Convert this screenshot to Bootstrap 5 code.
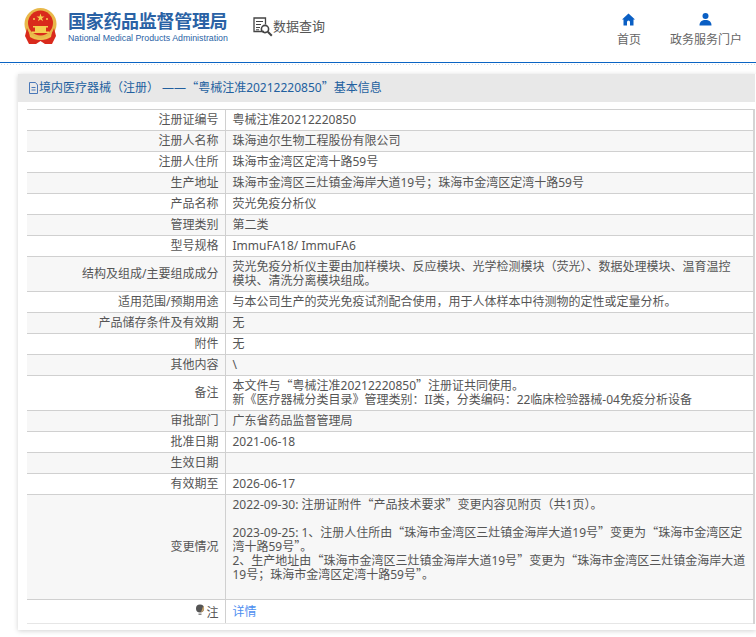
<!DOCTYPE html>
<html lang="zh-CN">
<head>
<meta charset="utf-8">
<title>数据查询</title>
<link href="https://cdn.jsdelivr.net/npm/bootstrap@5.3.0/dist/css/bootstrap.min.css" rel="stylesheet">
<style>
html,body{height:637px;overflow:hidden}
body{background:#fff;font-family:"Noto Sans","Noto Sans CJK SC",sans-serif;font-size:12px;color:#555}
.top-head{height:53px;padding-left:24px;padding-bottom:9px;border-bottom:1px solid #0a64c4;box-sizing:content-box}
.logo-main{font-size:18px;line-height:22px;font-weight:700;color:#2a62a5;letter-spacing:-.3px}
.logo-sub{font-family:"Liberation Sans",sans-serif;font-size:8.8px;line-height:12px;color:#2a62a5;white-space:nowrap}
.logo-box{margin-left:6px;margin-top:1px}
.query-box{margin-left:25px;font-size:13px;color:#555}
.nav-box{margin-left:auto;margin-right:14px;margin-top:8px;gap:29px}
.nav-item-x{color:#666;line-height:16px;text-decoration:none}
.nav-glyph{margin-bottom:6px}
.dither{height:4px;background-image:radial-gradient(#d8dde4 .6px,transparent .7px);background-size:3px 3px}
.panel-x{margin-left:18px;margin-top:7px;background:#fff;box-shadow:0 1px 5px rgba(0,0,0,.18);height:556px;padding-right:1px}
.panel-title{height:28px;background:#e8e8e8;color:#22609f;line-height:28px;padding-left:10px;white-space:pre}
.panel-body{padding:7px 0 0 9px}
.info-table{--bs-table-bg:transparent;--bs-table-striped-bg:transparent;font-size:12px;color:#555;border-top:1px solid #d0d0d0;margin:0;table-layout:fixed;border-right:2px solid #d4d4d4;line-height:14px}
.info-table td{padding:3px 7px 3px;border-bottom:1px solid #d0d0d0;vertical-align:middle;color:#555;box-shadow:none}
.info-table td:first-child{width:198px;text-align:right;padding-right:6px;border-right:1px solid #d0d0d0}
.info-table tr:nth-child(even) td{background:#f7f7f7}
.info-table tr:last-child td{border-bottom-color:#e6e6e6;padding-top:4px}
.qt{font-family:"Noto Sans CJK SC",sans-serif;line-height:0}
.detail-link{color:#4d8ef0;text-decoration:none}
</style>
</head>
<body>
<header class="top-head d-flex align-items-center">
  <svg width="38" height="38" viewBox="0 0 38 38" class="flex-shrink-0">
    <circle cx="16.500" cy="16" r="16" fill="#e8b84a"/>
    <circle cx="16.500" cy="15" r="12.500" fill="#d92a1c"/>
    <polygon points="16.500,5.500 17.500,8.500 20.500,8.500 18,10.300 19,13.300 16.500,11.500 14,13.300 15,10.300 12.500,8.500 15.500,8.500" fill="#f4cf50"/>
    <circle cx="10" cy="11" r="1" fill="#f4cf50"/><circle cx="23" cy="11" r="1" fill="#f4cf50"/>
    <path d="M9 18h15v1.500H9zM11 19.500h11v4H11zM8 23.500h17V25H8z" fill="#f4cf50"/>
    <path d="M3 20c2 7 7 11 13.500 12C23 31 28 27 30 20l2 8-4 8h-7l-4.500-3-4.500 3H5l-4-8z" fill="#d92a1c"/>
    <path d="M5 24c3 4 7 6 11.500 6.500C21 30 25 28 28 24l-1 5c-3 2-6 3-10.500 3S9 31 6 29z" fill="#edc04e"/>
  </svg>
  <div class="logo-box">
    <div class="logo-main">国家药品监督管理局</div>
    <div class="logo-sub">National Medical Products Administration</div>
  </div>
  <div class="query-box d-flex align-items-center">
    <svg width="20" height="20" viewBox="0 0 20 20" class="flex-shrink-0" fill="none" stroke="#444" stroke-width="1.300">
      <path d="M11 14.500H1V1h11.500v6.500"/><path d="M3 4.500h7M3 7.500h5M3 10.500h4M3 12.800h3" stroke-width="1"/>
      <circle cx="12" cy="12" r="3.600" stroke-width="1.600"/><path d="M14.800 14.800l4 4" stroke-width="2"/>
    </svg>
    <span>数据查询</span>
  </div>
  <nav class="nav-box d-flex">
    <a class="nav-item-x d-flex flex-column align-items-center" href="#">
      <svg width="13" height="13" viewBox="0 0 13 13" class="nav-glyph"><path d="M6.500 0.500 13 6.500h-1.500V12.500H8V9a1.500 1.500 0 0 0-3 0v3.500H1.500V6.500H0z" fill="#0a5fc4"/></svg>
      <span>首页</span>
    </a>
    <a class="nav-item-x d-flex flex-column align-items-center" href="#">
      <svg width="13" height="13" viewBox="0 0 13 13" class="nav-glyph"><circle cx="6.500" cy="3" r="3" fill="#0a5fc4"/><path d="M0.500 12.500c0-4 2.500-5.500 6-5.500s6 1.500 6 5.500z" fill="#0a5fc4"/></svg>
      <span>政务服务门户</span>
    </a>
  </nav>
</header>
<div class="dither"></div>
<main class="panel-x">
  <div class="panel-title d-flex align-items-center">
    <svg width="11" height="12" viewBox="0 0 11 12" class="flex-shrink-0" fill="none" stroke="#4a78b8"><path d="M1.500.5h6l2 2.500v8.500h-8zM3.500 5.500h4M3.500 8h4"/></svg>
    <span>境内医疗器械（注册） ——<span class="qt">“</span>粤械注准20212220850<span class="qt">”</span>基本信息</span>
  </div>
  <div class="panel-body">
    <table class="table info-table">
      <tbody>
        <tr><td>注册证编号</td><td>粤械注准20212220850</td></tr>
        <tr><td>注册人名称</td><td>珠海迪尔生物工程股份有限公司</td></tr>
        <tr><td>注册人住所</td><td>珠海市金湾区定湾十路59号</td></tr>
        <tr><td>生产地址</td><td>珠海市金湾区三灶镇金海岸大道19号；珠海市金湾区定湾十路59号</td></tr>
        <tr><td>产品名称</td><td>荧光免疫分析仪</td></tr>
        <tr><td>管理类别</td><td>第二类</td></tr>
        <tr><td>型号规格</td><td>ImmuFA18/ ImmuFA6</td></tr>
        <tr><td>结构及组成/主要组成成分</td><td>荧光免疫分析仪主要由加样模块、反应模块、光学检测模块（荧光）、数据处理模块、温育温控<br>模块、清洗分离模块组成。</td></tr>
        <tr><td>适用范围/预期用途</td><td>与本公司生产的荧光免疫试剂配合使用，用于人体样本中待测物的定性或定量分析。</td></tr>
        <tr><td>产品储存条件及有效期</td><td>无</td></tr>
        <tr><td>附件</td><td>无</td></tr>
        <tr><td>其他内容</td><td>\</td></tr>
        <tr><td>备注</td><td>本文件与<span class="qt">“</span>粤械注准20212220850<span class="qt">”</span>注册证共同使用。<br>新《医疗器械分类目录》管理类别：II类，分类编码：22临床检验器械-04免疫分析设备</td></tr>
        <tr><td>审批部门</td><td>广东省药品监督管理局</td></tr>
        <tr><td>批准日期</td><td>2021-06-18</td></tr>
        <tr><td>生效日期</td><td></td></tr>
        <tr><td>有效期至</td><td>2026-06-17</td></tr>
        <tr><td>变更情况</td><td>2022-09-30: 注册证附件<span class="qt">“</span>产品技术要求<span class="qt">”</span>变更内容见附页（共1页）。<br><br>2023-09-25: 1、注册人住所由<span class="qt">“</span>珠海市金湾区三灶镇金海岸大道19号<span class="qt">”</span>变更为<span class="qt">“</span>珠海市金湾区定<br>湾十路59号<span class="qt">”</span>。<br>2、生产地址由<span class="qt">“</span>珠海市金湾区三灶镇金海岸大道19号<span class="qt">”</span>变更为<span class="qt">“</span>珠海市金湾区三灶镇金海岸大道<br>19号；珠海市金湾区定湾十路59号<span class="qt">”</span>。<br><br></td></tr>
        <tr><td><svg width="11" height="12" viewBox="0 0 11 12" class="align-text-top"><circle cx="5" cy="4.500" r="4" fill="#555"/><path d="M8.200 2A4 4 0 0 1 6 8.400z" fill="#c9a36a"/><rect x="3.500" y="9.500" width="3" height="1.500" fill="#888"/></svg>注</td><td><a class="detail-link" href="#">详情</a></td></tr>
      </tbody>
    </table>
  </div>
</main>
<script src="https://cdn.jsdelivr.net/npm/bootstrap@5.3.0/dist/js/bootstrap.bundle.min.js"></script>
</body>
</html>
